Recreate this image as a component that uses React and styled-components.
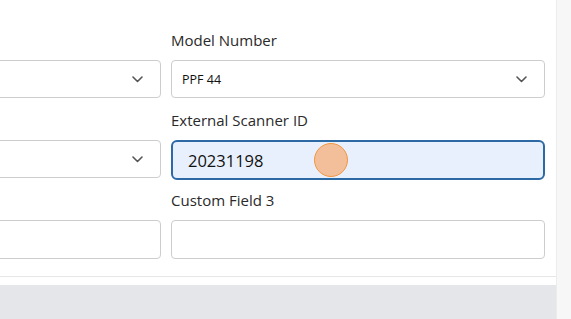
import styled, { createGlobalStyle } from "styled-components";

const Global = createGlobalStyle`
  html, body { margin: 0; padding: 0; background: #f7f7f8; }
  body { font-family: "Open Sans", "Noto Sans", sans-serif; color: #222; }
`;

const Page = styled.div`
  display: flex;
  width: 571px;
  height: 319px;
  overflow: hidden;
`;

const Panel = styled.div`
  width: 556px;
  flex: none;
  display: flex;
  flex-direction: column;
  background: #fff;
  border-right: 1px solid #ececee;
  overflow: hidden;
`;

const Strip = styled.div`
  flex: 1;
  background: #f7f7f8;
`;

const Form = styled.div`
  display: grid;
  grid-template-columns: 374px 374px;
  column-gap: 10px;
  row-gap: 10px;
  margin-left: -213px;
  padding: 30px 0 16px;
  border-bottom: 1px solid #e6e6e8;
`;

const Field = styled.div`
  display: flex;
  flex-direction: column;
  gap: 10px;
  height: 70px;
`;

const Label = styled.label`
  display: block;
  height: 20px;
  font-size: 15px;
  line-height: 20px;
  color: #2a2a2a;
  white-space: nowrap;
`;

const Control = styled.div`
  position: relative;
  box-sizing: border-box;
  height: ${(p) => (p.$focused ? "40px" : p.$select ? "38px" : "39px")};
  display: flex;
  align-items: center;
  padding: 0 ${(p) => (p.$focused ? "15px" : "10px")};
  border: ${(p) => (p.$focused ? "2px solid #2c69a5" : "1px solid #cdcdcd")};
  border-radius: ${(p) => (p.$focused ? "6px" : "4px")};
  background: ${(p) => (p.$focused ? "#e8f0fd" : "#fff")};
  font-size: ${(p) => (p.$focused ? "16.5px" : "12.5px")};
  color: #111;
`;

const Value = styled.span`
  flex: 1;
`;

const Chevron = styled.svg`
  width: 11px;
  height: 7px;
  margin-right: 7px;
`;

const Click = styled.span`
  position: absolute;
  left: 141px;
  top: 1px;
  width: 32px;
  height: 32px;
  border-radius: 50%;
  background: #f2bf9a;
  border: 1.5px solid #f3963f;
`;

const Gap = styled.div`
  height: 8px;
`;

const Footer = styled.div`
  flex: 1;
  background: #e5e6e9;
`;

const Down = () => (
  <Chevron viewBox="0 0 11 7">
    <path d="M1 1l4.5 4.5L10 1" fill="none" stroke="#555" strokeWidth="1.6" strokeLinecap="round" strokeLinejoin="round" />
  </Chevron>
);

export default function App() {
  return (
    <Page>
      <Global />
      <Panel>
        <Form>
          <Field>
            <Label />
            <Control $select><Value /><Down /></Control>
          </Field>
          <Field>
            <Label>Model Number</Label>
            <Control $select><Value>PPF 44</Value><Down /></Control>
          </Field>
          <Field>
            <Label />
            <Control $select><Value /><Down /></Control>
          </Field>
          <Field>
            <Label>External Scanner ID</Label>
            <Control $focused>
              <Value>20231198</Value>
              <Click />
            </Control>
          </Field>
          <Field>
            <Label />
            <Control />
          </Field>
          <Field>
            <Label>Custom Field 3</Label>
            <Control />
          </Field>
        </Form>
        <Gap />
        <Footer />
      </Panel>
      <Strip />
    </Page>
  );
}
